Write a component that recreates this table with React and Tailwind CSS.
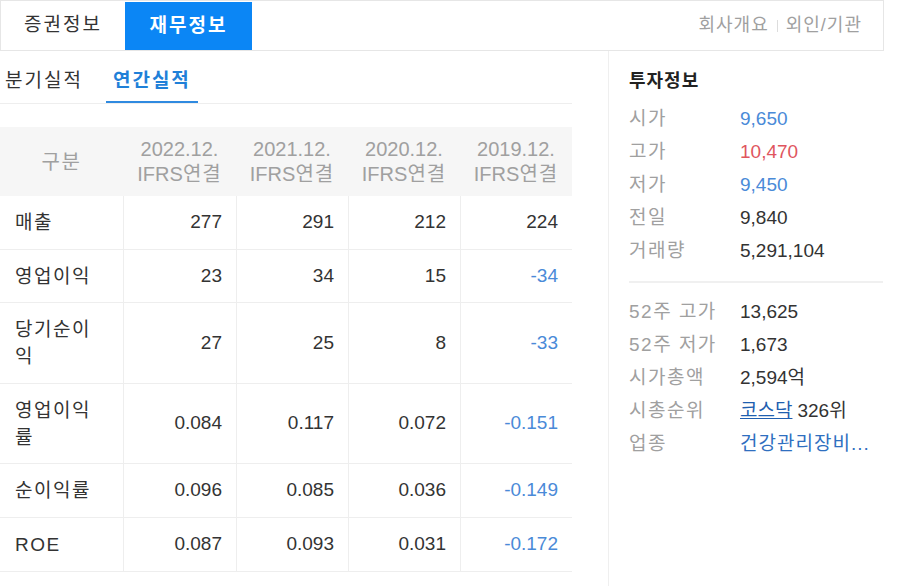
import React from "react";

const font = { fontFamily: '"Liberation Sans", "Noto Sans CJK KR", sans-serif' };

const years = ["2022.12.", "2021.12.", "2020.12.", "2019.12."];

const rows = [
  { label: "매출", h: "h-[54px]", vals: ["277", "291", "212", "224"] },
  { label: "영업이익", h: "h-[53px]", vals: ["23", "34", "15", "-34"] },
  { label: ["당기순이", "익"], h: "h-[81px]", vals: ["27", "25", "8", "-33"] },
  { label: ["영업이익", "률"], h: "h-[80px]", vals: ["0.084", "0.117", "0.072", "-0.151"] },
  { label: "순이익률", h: "h-[54px]", vals: ["0.096", "0.085", "0.036", "-0.149"] },
  { label: "ROE", h: "h-[54px]", vals: ["0.087", "0.093", "0.031", "-0.172"] },
];

const colW = ["w-[123px]", "w-[113px]", "w-[112px]", "w-[112px]", "w-[112px]"];

const info1 = [
  { k: "시가", v: "9,650", c: "text-[#4a8ad8]" },
  { k: "고가", v: "10,470", c: "text-[#e0555e]" },
  { k: "저가", v: "9,450", c: "text-[#4a8ad8]" },
  { k: "전일", v: "9,840", c: "text-[#333]" },
  { k: "거래량", v: "5,291,104", c: "text-[#333]" },
];

const FinanceTable = () => (
  <div className="w-[572px]">
    {/* header */}
    <div className="flex h-[69px] bg-[#f6f6f6] text-[20px] text-[#a0a0a0]">
      <div className={`${colW[0]} flex items-center justify-center tracking-[1.5px]`}>구분</div>
      {years.map((y, i) => (
        <div key={y} className={`${colW[i + 1]} flex flex-col items-center justify-center leading-[25px]`}>
          <span>{y}</span>
          <span>
            IFRS<span className="tracking-[1px]">연결</span>
          </span>
        </div>
      ))}
    </div>
    {rows.map((r, ri) => (
      <div key={ri} className={`flex ${r.h} border-b border-[#eeeeee] text-[19px] text-[#333]`}>
        <div className={`${colW[0]} flex items-center pl-[15px] leading-[27px] tracking-[1.5px]`}>
          {Array.isArray(r.label) ? (
            <div className="flex flex-col">
              <span>{r.label[0]}</span>
              <span>{r.label[1]}</span>
            </div>
          ) : (
            r.label
          )}
        </div>
        {r.vals.map((v, i) => (
          <div
            key={i}
            className={`${colW[i + 1]} flex items-center justify-end pr-[14px] border-l border-[#eeeeee] ${v.startsWith("-") ? "text-[#4a8ad8]" : ""}`}
          >
            {v}
          </div>
        ))}
      </div>
    ))}
  </div>
);

const InfoRow = ({ k, children }) => (
  <div className="flex h-[33px] items-center text-[19px] whitespace-nowrap">
    <span className="w-[111px] text-[#a0a0a0] tracking-[1.5px]">{k}</span>
    {children}
  </div>
);

export default function App() {
  return (
    <div className="w-[900px] h-[586px] bg-white overflow-hidden" style={font}>
      {/* Top tab bar */}
      <div className="flex w-[884px] h-[51px] border border-[#e6e6e6]">
        <div className="w-[124px] flex items-center justify-center text-[19px] text-[#333] tracking-[2px]">증권정보</div>
        <div className="w-[127px] mt-[1px] flex items-center justify-center bg-[#0b86f5] text-white text-[19px] font-bold tracking-[2px]">
          재무정보
        </div>
        <div className="ml-auto flex items-center pr-[21px] text-[18px] text-[#a0a0a0]">
          <span className="tracking-[1px]">회사개요</span>
          <span className="mx-[8px] h-[12px] w-px bg-[#dddddd]"></span>
          <span className="tracking-[1px]">외인/기관</span>
        </div>
      </div>

      <div className="flex">
        {/* Left: performance */}
        <div className="w-[608px]">
          <div className="flex w-[572px] h-[53px] border-b border-[#eeeeee] text-[19px] tracking-[2px]">
            <div className="pl-[5px] pt-[16px] text-[#333]">분기실적</div>
            <div className="ml-[23px] px-[7px] pt-[16px] text-[#1f80d8] font-bold border-b-2 border-[#2f8ae0]">연간실적</div>
          </div>
          <div className="pt-[23px]">
            <FinanceTable />
          </div>
        </div>

        {/* Right: investment info */}
        <div className="w-[276px] h-[535px] border-l border-[#efefef] pl-[20px]">
          <div className="pt-[17px] pb-[8px] text-[18px] font-bold text-[#222] tracking-[1px]">투자정보</div>
          {info1.map((r) => (
            <InfoRow key={r.k} k={r.k}>
              <span className={r.c}>{r.v}</span>
            </InfoRow>
          ))}
          <div className="my-[13px] h-[2px] w-[254px] bg-[#f0f0f0]"></div>
          <InfoRow k="52주 고가">
            <span className="text-[#333]">13,625</span>
          </InfoRow>
          <InfoRow k="52주 저가">
            <span className="text-[#333]">1,673</span>
          </InfoRow>
          <InfoRow k="시가총액">
            <span className="text-[#333]">2,594억</span>
          </InfoRow>
          <InfoRow k="시총순위">
            <span className="text-[#1f5fb0] underline">코스닥</span>
            <span className="text-[#333] ml-[5px]">326위</span>
          </InfoRow>
          <InfoRow k="업종">
            <span className="text-[#2f6fc0] tracking-[1px]">건강관리장비...</span>
          </InfoRow>
        </div>
      </div>
    </div>
  );
}
